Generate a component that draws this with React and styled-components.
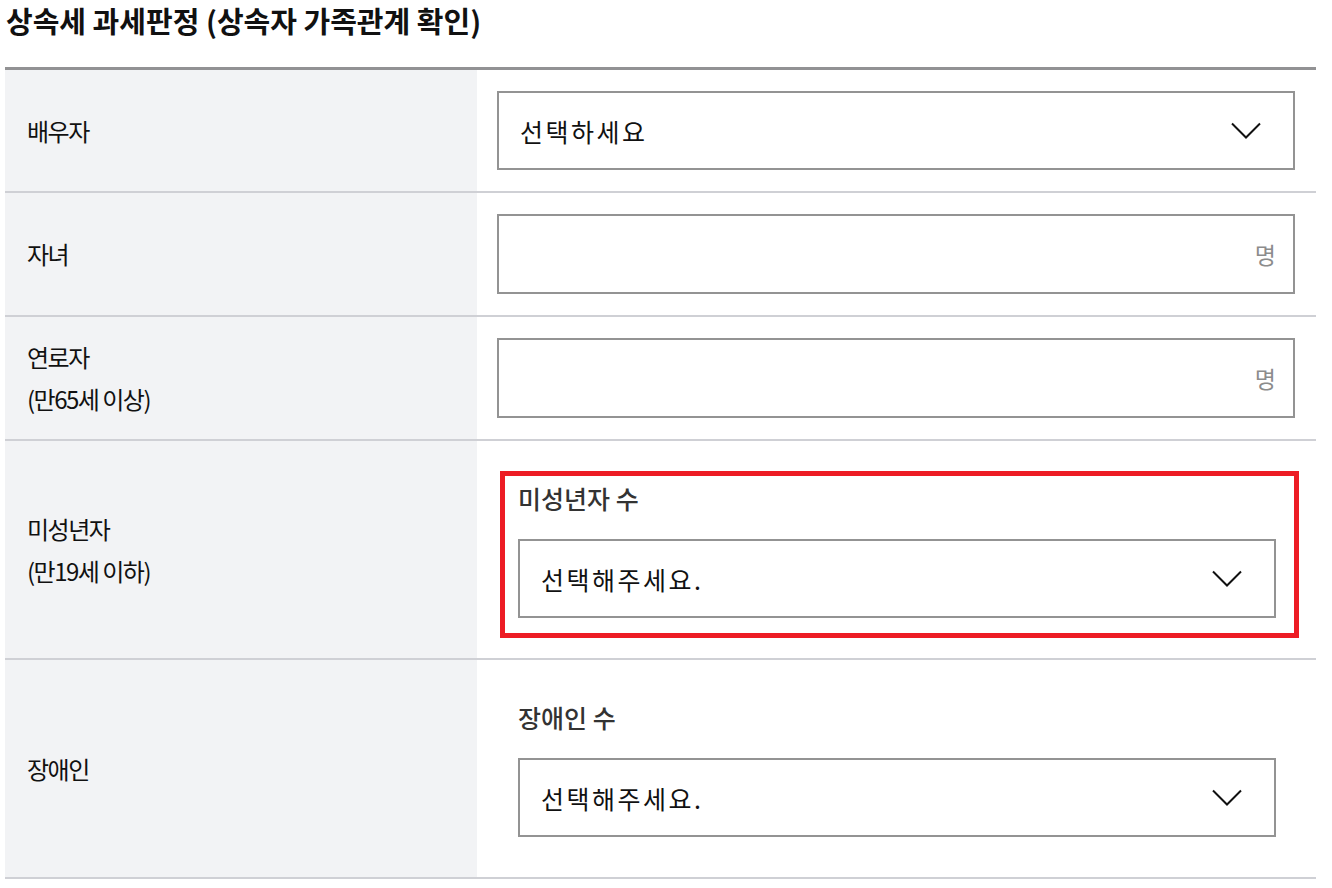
import React from "react";
import styled, { createGlobalStyle } from "styled-components";

const GlobalStyle = createGlobalStyle`
    body {
        margin: 0;
        background: #fff;
        font-family: "Noto Sans CJK KR", "Noto Sans", sans-serif;
        color: #111;
    }
`;

export default function App() {
    return (
        <>
            <GlobalStyle />
            <Page>
                <Title>상속세 과세판정 (상속자 가족관계 확인)</Title>
                <Table>
                    <Row>
                        <Label>배우자</Label>
                        <Field>
                            <Select>
                                <span>선택하세요</span>
                                <Chevron />
                            </Select>
                        </Field>
                    </Row>
                    <Row>
                        <Label>자녀</Label>
                        <Field>
                            <Input>
                                <Unit>명</Unit>
                            </Input>
                        </Field>
                    </Row>
                    <Row>
                        <Label>
                            연로자
                            <br />
                            (만65세 이상)
                        </Label>
                        <Field>
                            <Input>
                                <Unit>명</Unit>
                            </Input>
                        </Field>
                    </Row>
                    <Row>
                        <Label>
                            미성년자
                            <br />
                            (만19세 이하)
                        </Label>
                        <Field>
                            <Group $active>
                                <GroupTitle>미성년자 수</GroupTitle>
                                <Select>
                                    <span>선택해주세요.</span>
                                    <Chevron />
                                </Select>
                            </Group>
                        </Field>
                    </Row>
                    <Row>
                        <Label>장애인</Label>
                        <Field>
                            <Group>
                                <GroupTitle>장애인 수</GroupTitle>
                                <Select>
                                    <span>선택해주세요.</span>
                                    <Chevron />
                                </Select>
                            </Group>
                        </Field>
                    </Row>
                </Table>
            </Page>
        </>
    );
}

function Chevron() {
    return (
        <svg width="30" height="17" viewBox="0 0 30 17" fill="none">
            <polyline
                points="1,1.5 15,15.5 29,1.5"
                stroke="#111"
                strokeWidth="2"
            />
        </svg>
    );
}

const Page = styled.div`
    padding: 0 5px;
`;

const Title = styled.h1`
    margin: 0 0 0 1px;
    padding-top: 2px;
    height: 65px;
    font-size: 29px;
    font-weight: 700;
    letter-spacing: 0;
    line-height: 36px;
    color: #111;
`;

const Table = styled.div`
    width: 1311px;
    border-top: 3px solid #929294;
`;

const Row = styled.div`
    display: grid;
    grid-template-columns: 472px 1fr;
    border-bottom: 2px solid #cfd0d5;
`;

const Label = styled.div`
    display: flex;
    align-items: center;
    padding-left: 22px;
    background: #f2f3f5;
    font-size: 24px;
    line-height: 42px;
    letter-spacing: -1.5px;
    color: #111;
`;

const Field = styled.div`
    padding: 21px 21px 21px 20px;
`;

const Box = styled.div`
    display: flex;
    align-items: center;
    justify-content: space-between;
    box-sizing: border-box;
    border: 2px solid #939393;
    background: #fff;
`;

const Select = styled(Box)`
    height: 79px;
    padding: 0 32px 0 21px;
    font-size: 25px;
    letter-spacing: 2.5px;
    color: #111;
`;

const Input = styled(Box)`
    height: 80px;
    justify-content: flex-end;
    padding-right: 17px;
`;

const Unit = styled.span`
    font-size: 23px;
    color: #8c8c8c;
`;

const Group = styled.div`
    margin: 9px -4px -1px 3px;
    padding: 5px 18px 15px 13px;
    border: 5px solid ${(p) => (p.$active ? "#ed1c24" : "transparent")};
`;

const GroupTitle = styled.div`
    margin-bottom: 24px;
    font-size: 25px;
    font-weight: 500;
    line-height: 34px;
    letter-spacing: 0;
    color: #333;
`;
